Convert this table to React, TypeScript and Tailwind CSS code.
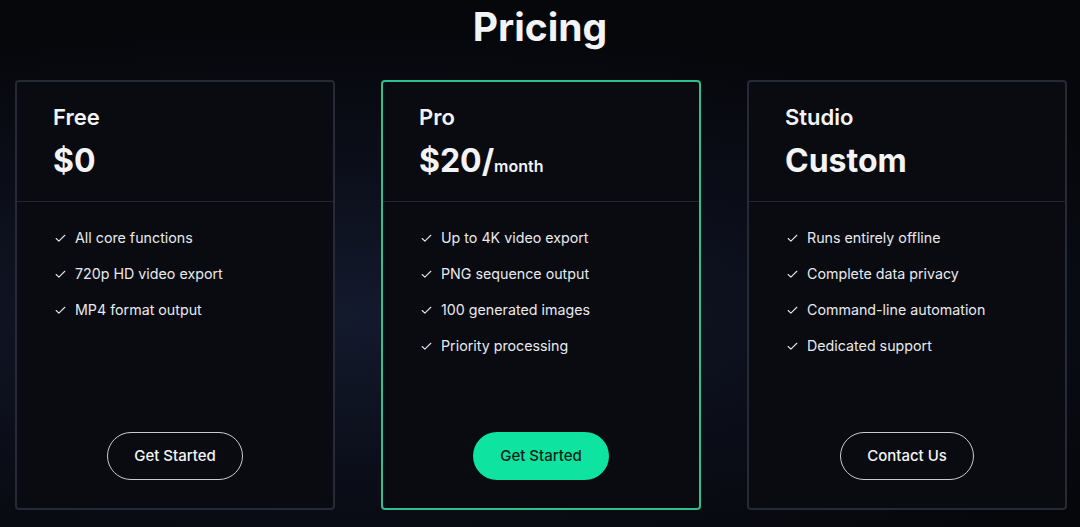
import { Check } from "lucide-react";

type Plan = {
  name: string;
  price: string;
  suffix?: string;
  features: string[];
  cta: string;
  featured?: boolean;
};

const plans: Plan[] = [
  {
    name: "Free",
    price: "$0",
    features: ["All core functions", "720p HD video export", "MP4 format output"],
    cta: "Get Started",
  },
  {
    name: "Pro",
    price: "$20/",
    suffix: "month",
    features: [
      "Up to 4K video export",
      "PNG sequence output",
      "100 generated images",
      "Priority processing",
    ],
    cta: "Get Started",
    featured: true,
  },
  {
    name: "Studio",
    price: "Custom",
    features: [
      "Runs entirely offline",
      "Complete data privacy",
      "Command-line automation",
      "Dedicated support",
    ],
    cta: "Contact Us",
  },
];

const PlanCard = ({ plan }: { plan: Plan }) => (
  <div
    className={`flex h-[430px] flex-col rounded-[4px] bg-[#0a0b10] ${
      plan.featured ? "border-2 border-[#2fc08e]" : "border-2 border-[#262936]"
    }`}
  >
    <div className="h-[120px] border-b border-[#242733] px-[36px] pt-[21px]">
      <h3 className="text-[22px] font-semibold leading-7 text-[#f3f4f6]">{plan.name}</h3>
      <p className="mt-[10px] flex items-baseline text-[32px] font-bold leading-10 text-[#f3f4f6]">
        {plan.price}
        {plan.suffix && <span className="text-[16px] font-semibold">{plan.suffix}</span>}
      </p>
    </div>
    <ul className="flex flex-col gap-[12px] px-[36px] pt-[24px]">
      {plan.features.map((f) => (
        <li key={f} className="flex h-[24px] items-center gap-[7px] text-[14.25px] text-[#e8e9ee]">
          <Check size={13} strokeWidth={2} className="mx-[1px] text-[#e5e7eb]" />
          {f}
        </li>
      ))}
    </ul>
    <div className="mt-auto flex justify-center pb-[28px]">
      {plan.featured ? (
        <button className="h-[48px] w-[136px] rounded-full bg-[#0fe3a0] text-[15px] font-medium text-[#0b1f18]">
          {plan.cta}
        </button>
      ) : (
        <button className="h-[48px] rounded-full border border-[#c9cbd3] px-[26px] text-[15px] font-medium text-[#f3f4f6]">
          {plan.cta}
        </button>
      )}
    </div>
  </div>
);

export default function App() {
  return (
    <div
      className="h-[527px] w-full overflow-hidden bg-[radial-gradient(ellipse_90%_55%_at_30%_60%,#131a2c_0%,#0b0e19_55%,#06070b_100%)]"
      style={{ fontFamily: "Inter, 'Noto Sans', sans-serif" }}
    >
      <h1 className="pt-[7px] text-center text-[39px] font-bold leading-10 text-[#f3f4f6]">Pricing</h1>
      <div className="ml-[15px] mt-[33px] grid grid-cols-[320px_320px_320px] gap-[46px]">
        {plans.map((p) => (
          <PlanCard key={p.name} plan={p} />
        ))}
      </div>
    </div>
  );
}
